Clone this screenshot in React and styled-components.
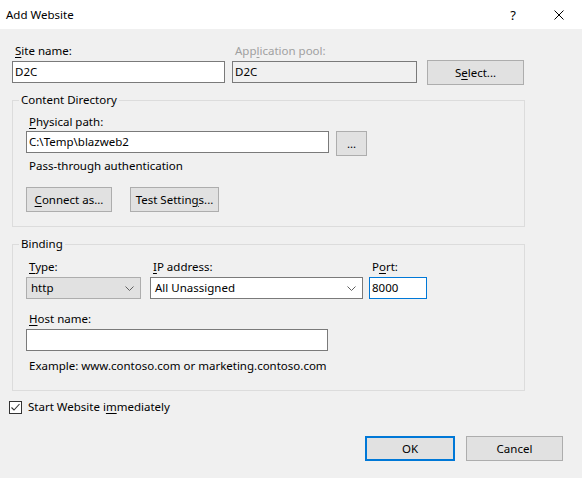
import React from "react";
import styled, { createGlobalStyle } from "styled-components";

const FONT = `"Noto Sans", "Open Sans", sans-serif`;

const Global = createGlobalStyle`
  html, body { margin: 0; padding: 0; background: #f0f0f0; }
  body { font-family: ${FONT}; font-size: 11.5px; color: #000; }
  * { box-sizing: border-box; }
`;

const Window = styled.div`
  width: 582px;
  height: 478px;
  overflow: hidden;
  background: #f0f0f0;
  display: flex;
  flex-direction: column;
`;

const TitleBar = styled.div`
  height: 29px;
  background: #fff;
  display: flex;
  align-items: center;
  padding-left: 6px;
  flex-shrink: 0;
`;

const Title = styled.div`
  flex: 1;
  line-height: 16px;
`;

const TitleButton = styled.div`
  width: ${(p) => p.$w}px;
  display: flex;
  justify-content: center;
  align-items: center;
  font-size: 13px;
  color: #000;
`;

const Body = styled.div`
  display: flex;
  flex-direction: column;
  padding: 14px 0 0 12px;
`;

const TopRow = styled.div`
  display: flex;
  align-items: flex-end;
`;

const Field = styled.div`
  display: flex;
  flex-direction: column;
  width: ${(p) => p.$w}px;
  margin-right: ${(p) => p.$mr || 0}px;
`;

const Label = styled.label`
  display: block;
  line-height: 16px;
  height: 16px;
  padding-left: 3px;
  margin-bottom: ${(p) => (p.$mb == null ? 2 : p.$mb)}px;
  color: ${(p) => (p.$disabled ? "#a0a0a0" : "#000")};
  white-space: nowrap;
`;

const U = styled.span`
  text-decoration: underline;
  text-underline-offset: 2px;
`;

const TextBox = styled.div`
  width: ${(p) => (p.$w ? `${p.$w}px` : "100%")};
  height: 22px;
  border: 1px solid ${(p) => (p.$focus ? "#0078d7" : "#7a7a7a")};
  background: ${(p) => (p.$disabled ? "#f0f0f0" : "#fff")};
  display: flex;
  align-items: center;
  padding-left: 2px;
  line-height: 16px;
  white-space: nowrap;
  flex-shrink: 0;
`;

const Button = styled.div`
  width: ${(p) => p.$w}px;
  height: 25px;
  border: ${(p) => (p.$default ? "2px solid #0078d7" : "1px solid #adadad")};
  background: #e1e1e1;
  display: flex;
  align-items: center;
  justify-content: center;
  line-height: 16px;
  white-space: nowrap;
  flex-shrink: 0;
  margin-bottom: ${(p) => p.$mb || 0}px;
`;

const Group = styled.fieldset`
  width: 513px;
  margin: 9px 0 0 0;
  padding: 0 0 ${(p) => p.$pb}px 6px;
  border: 1px solid #dcdcdc;
  min-width: 0;
`;

const Legend = styled.legend`
  padding: 0 2px;
  line-height: 16px;
`;

const GroupInner = styled.div`
  display: flex;
  flex-direction: column;
  padding: ${(p) => p.$pt}px 0 0 7px;
`;

const Row = styled.div`
  display: flex;
  align-items: flex-start;
  gap: ${(p) => p.$gap || 0}px;
  margin-top: ${(p) => p.$mt || 0}px;
`;

const Note = styled.div`
  line-height: 16px;
  padding-left: 3px;
  margin-top: ${(p) => p.$mt || 0}px;
`;

const Combo = styled.div`
  width: ${(p) => p.$w}px;
  height: 22px;
  border: 1px solid ${(p) => (p.$gray ? "#adadad" : "#7a7a7a")};
  background: ${(p) => (p.$gray ? "#e1e1e1" : "#fff")};
  display: flex;
  align-items: center;
  padding: 0 6px 0 4px;
  line-height: 16px;
`;

const ComboText = styled.span`
  flex: 1;
`;

const CheckRow = styled.div`
  display: flex;
  align-items: center;
  margin: 8px 0 0 -3px;
  gap: 6px;
  line-height: 16px;
`;

const CheckBox = styled.div`
  width: 13px;
  height: 13px;
  border: 1px solid #333;
  background: #fff;
  display: flex;
  align-items: center;
  justify-content: center;
`;

const Footer = styled.div`
  display: flex;
  justify-content: flex-end;
  padding-right: 19px;
  margin-top: 21px;
  gap: 11px;
`;

const Chevron = () => (
  <svg width="9" height="5" viewBox="0 0 9 5">
    <path d="M0.5 0.5 L4.5 4.5 L8.5 0.5" fill="none" stroke="#606060" strokeWidth="1" />
  </svg>
);

export default function App() {
  return (
    <>
      <Global />
      <Window>
        <TitleBar>
          <Title>Add Website</Title>
          <TitleButton $w={46}>?</TitleButton>
          <TitleButton $w={46}>
            <svg width="10" height="10" viewBox="0 0 10 10">
              <path d="M0.5 0.5 L9.5 9.5 M9.5 0.5 L0.5 9.5" stroke="#000" strokeWidth="1" />
            </svg>
          </TitleButton>
        </TitleBar>
        <Body>
          <TopRow>
            <Field $w={213} $mr={7}>
              <Label><U>S</U>ite name:</Label>
              <TextBox>D2C</TextBox>
            </Field>
            <Field $w={185} $mr={10}>
              <Label $disabled>App<U>l</U>ication pool:</Label>
              <TextBox $disabled>D2C</TextBox>
            </Field>
            <Button $w={97} $mb={-2}>S<U>e</U>lect...</Button>
          </TopRow>

          <Group $pb={14}>
            <Legend>Content Directory</Legend>
            <GroupInner $pt={6}>
              <Label $mb={1}><U>P</U>hysical path:</Label>
              <Row $gap={7}>
                <TextBox $w={303}>C:\Temp\blazweb2</TextBox>
                <Button $w={31}>...</Button>
              </Row>
              <Note $mt={2}>Pass-through authentication</Note>
              <Row $gap={18} $mt={13}>
                <Button $w={86}><U>C</U>onnect as...</Button>
                <Button $w={89}>Test Settin<U>g</U>s...</Button>
              </Row>
            </GroupInner>
          </Group>

          <Group $pb={16}>
            <Legend>Binding</Legend>
            <GroupInner $pt={7}>
              <Row>
                <Field $w={115} $mr={9}>
                  <Label><U>T</U>ype:</Label>
                  <Combo $w={115} $gray>
                    <ComboText>http</ComboText>
                    <Chevron />
                  </Combo>
                </Field>
                <Field $w={213} $mr={6}>
                  <Label><U>I</U>P address:</Label>
                  <Combo $w={213}>
                    <ComboText>All Unassigned</ComboText>
                    <Chevron />
                  </Combo>
                </Field>
                <Field $w={58}>
                  <Label>P<U>o</U>rt:</Label>
                  <TextBox $focus>8000</TextBox>
                </Field>
              </Row>
              <Row $mt={12}>
                <Field $w={302}>
                  <Label><U>H</U>ost name:</Label>
                  <TextBox />
                </Field>
              </Row>
              <Note $mt={7}>Example: www.contoso.com or marketing.contoso.com</Note>
            </GroupInner>
          </Group>

          <CheckRow>
            <CheckBox>
              <svg width="11" height="11" viewBox="0 0 11 11">
                <path d="M1.5 5.5 L4 8 L9.5 2" fill="none" stroke="#333" strokeWidth="1.1" />
              </svg>
            </CheckBox>
            <span>Start Website i<U>m</U>mediately</span>
          </CheckRow>

          <Footer>
            <Button $w={90} $default>OK</Button>
            <Button $w={97}>Cancel</Button>
          </Footer>
        </Body>
      </Window>
    </>
  );
}
